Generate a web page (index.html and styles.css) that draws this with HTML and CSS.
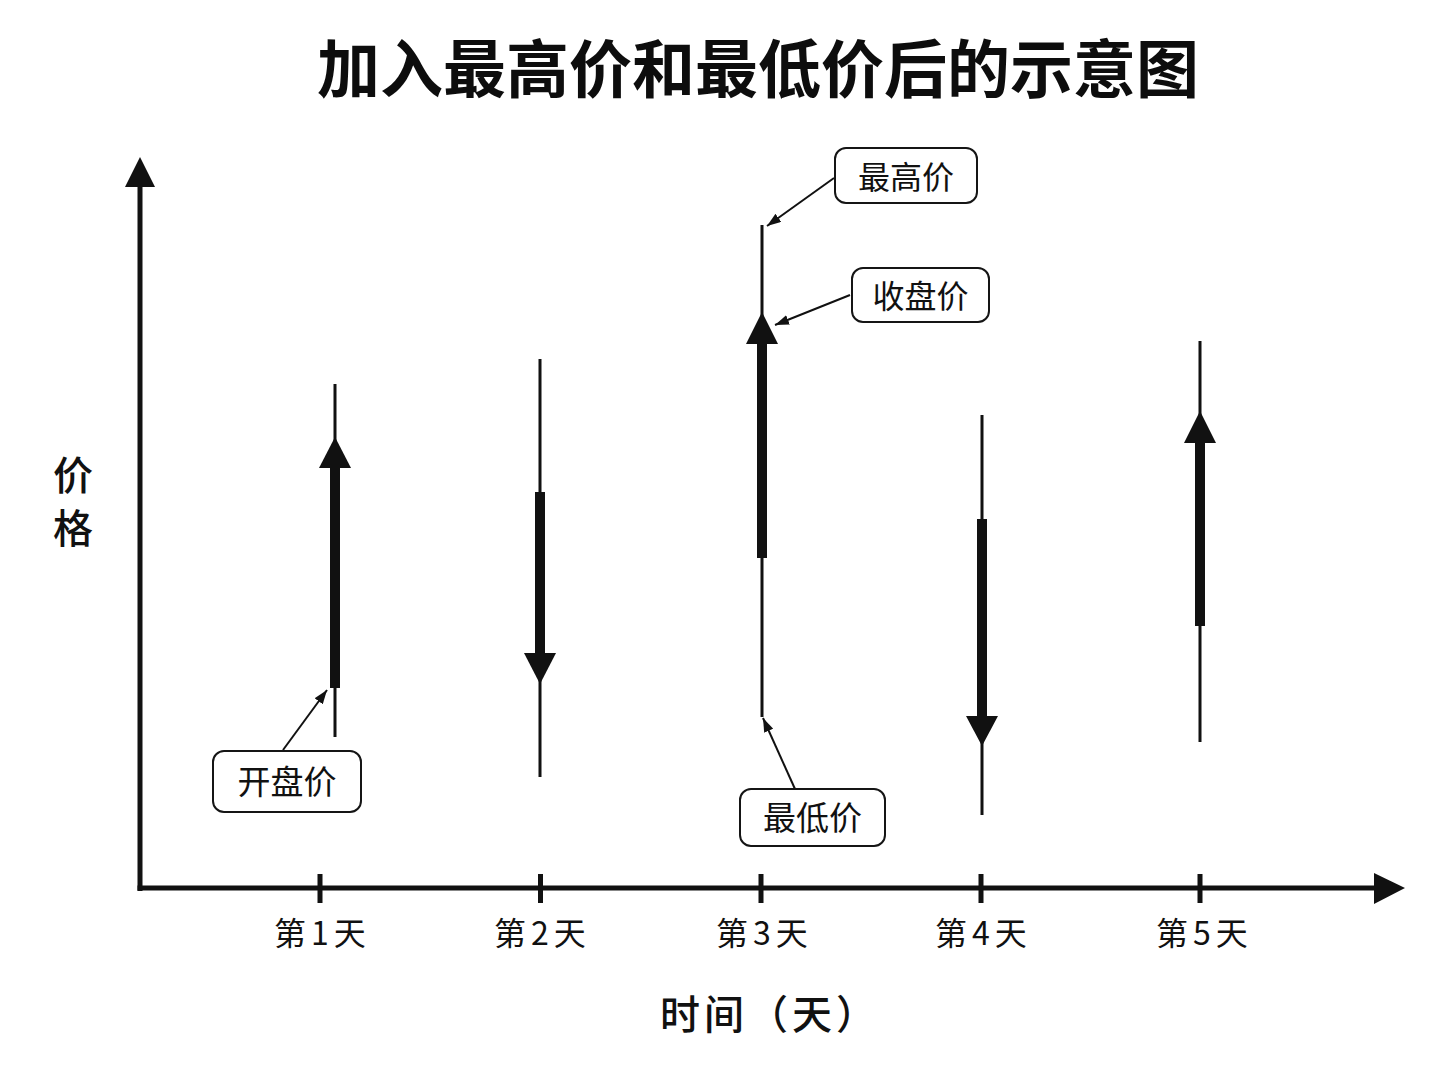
FILE: index.html
```html
<!DOCTYPE html>
<html lang="zh-CN">
<head>
<meta charset="utf-8">
<title>加入最高价和最低价后的示意图</title>
<link rel="stylesheet" href="styles.css">
</head>
<body>
<div class="page">
  <h1 class="title">加入最高价和最低价后的示意图</h1>

  <svg class="plot" viewBox="0 0 1448 1086" width="1448" height="1086" aria-hidden="true">
    <defs>
      <marker id="ah" markerWidth="14" markerHeight="10" refX="14" refY="5" orient="auto" markerUnits="userSpaceOnUse">
        <path d="M0,0 L14,5 L0,10 Z" fill="#111"/>
      </marker>
    </defs>

    <!-- axes -->
    <rect x="137.5" y="185" width="5" height="706" fill="#111"/>
    <polygon points="140,157 125,187 155,187" fill="#111"/>
    <rect x="137.5" y="885.5" width="1238" height="5" fill="#111"/>
    <polygon points="1405,888 1374,873 1374,904" fill="#111"/>

    <!-- ticks -->
    <rect x="317.5" y="874" width="5" height="29" fill="#111"/>
    <rect x="538" y="874" width="5" height="29" fill="#111"/>
    <rect x="758.5" y="874" width="5" height="29" fill="#111"/>
    <rect x="978.5" y="874" width="5" height="29" fill="#111"/>
    <rect x="1197.5" y="874" width="5" height="29" fill="#111"/>

    <!-- day 1 -->
    <rect x="333.5" y="384" width="3" height="353" fill="#111"/>
    <rect x="330" y="466" width="10" height="222" fill="#111"/>
    <polygon points="335,437 319,468 351,468" fill="#111"/>

    <!-- day 2 -->
    <rect x="538.5" y="359" width="3" height="418" fill="#111"/>
    <rect x="535" y="492" width="10" height="163" fill="#111"/>
    <polygon points="524,653 556,653 540,684" fill="#111"/>

    <!-- day 3 -->
    <rect x="760.5" y="225" width="3" height="492" fill="#111"/>
    <rect x="757" y="342" width="10" height="216" fill="#111"/>
    <polygon points="762,312 746,344 778,344" fill="#111"/>

    <!-- day 4 -->
    <rect x="980.5" y="415" width="3" height="400" fill="#111"/>
    <rect x="977" y="519" width="10" height="199" fill="#111"/>
    <polygon points="966,716 998,716 982,746" fill="#111"/>

    <!-- day 5 -->
    <rect x="1198.5" y="341" width="3" height="401" fill="#111"/>
    <rect x="1195" y="441" width="10" height="185" fill="#111"/>
    <polygon points="1200,411 1184,443 1216,443" fill="#111"/>

    <!-- pointers -->
    <line x1="834" y1="178" x2="767" y2="226" stroke="#111" stroke-width="2" marker-end="url(#ah)"/>
    <line x1="850" y1="295" x2="775" y2="325" stroke="#111" stroke-width="2" marker-end="url(#ah)"/>
    <line x1="283" y1="750" x2="327" y2="690" stroke="#111" stroke-width="2" marker-end="url(#ah)"/>
    <line x1="795" y1="789" x2="763" y2="718" stroke="#111" stroke-width="2" marker-end="url(#ah)"/>
  </svg>

  <div class="ylabel">价格</div>

  <div class="tick t1">第1天</div>
  <div class="tick t2">第2天</div>
  <div class="tick t3">第3天</div>
  <div class="tick t4">第4天</div>
  <div class="tick t5">第5天</div>

  <div class="xlabel">时间（天）</div>

  <div class="callout c-high">最高价</div>
  <div class="callout c-close">收盘价</div>
  <div class="callout c-open">开盘价</div>
  <div class="callout c-low">最低价</div>
</div>
</body>
</html>
```

FILE: styles.css
```css
html, body {
  margin: 0;
  padding: 0;
  background: #fff;
}

body {
  font-family: "Noto Sans CJK SC", "Noto Sans", "Liberation Sans", sans-serif;
  color: #111;
}

.page {
  position: relative;
  width: 1448px;
  height: 1086px;
  overflow: hidden;
}

.title {
  margin: 0;
  padding: 33px 0 0 68px;
  font-size: 63px;
  line-height: 63px;
  font-weight: 700;
  text-align: center;
  color: #0d0d0d;
}

.plot {
  position: absolute;
  left: 0;
  top: 0;
}

.ylabel {
  position: absolute;
  left: 50px;
  top: 455px;
  writing-mode: vertical-rl;
  text-orientation: upright;
  font-size: 40px;
  line-height: 46px;
  letter-spacing: 13px;
  font-weight: 500;
}

.tick {
  position: absolute;
  top: 913px;
  width: 140px;
  margin-left: -70px;
  text-align: center;
  font-size: 32px;
  line-height: 36px;
  letter-spacing: 5px;
  padding-left: 5px;
  box-sizing: border-box;
}

.t1 { left: 320px; }
.t2 { left: 540px; }
.t3 { left: 762px; }
.t4 { left: 981px; }
.t5 { left: 1202px; }

.xlabel {
  position: absolute;
  left: 660px;
  top: 991px;
  width: 220px;
  text-align: left;
  font-size: 40px;
  line-height: 42px;
  letter-spacing: 4px;
  font-weight: 500;
}

.callout {
  position: absolute;
  box-sizing: border-box;
  border: 2px solid #151515;
  border-radius: 12px;
  background: #fff;
  display: flex;
  align-items: center;
  justify-content: center;
  font-size: 32px;
  line-height: 1;
  padding-bottom: 2px;
}

.c-high  { left: 834px; top: 147px; width: 144px; height: 57px; }
.c-close { left: 851px; top: 267px; width: 139px; height: 56px; }
.c-open  { left: 212px; top: 750px; width: 150px; height: 63px; font-size: 33px; }
.c-low   { left: 739px; top: 788px; width: 147px; height: 59px; font-size: 33px; }
```
